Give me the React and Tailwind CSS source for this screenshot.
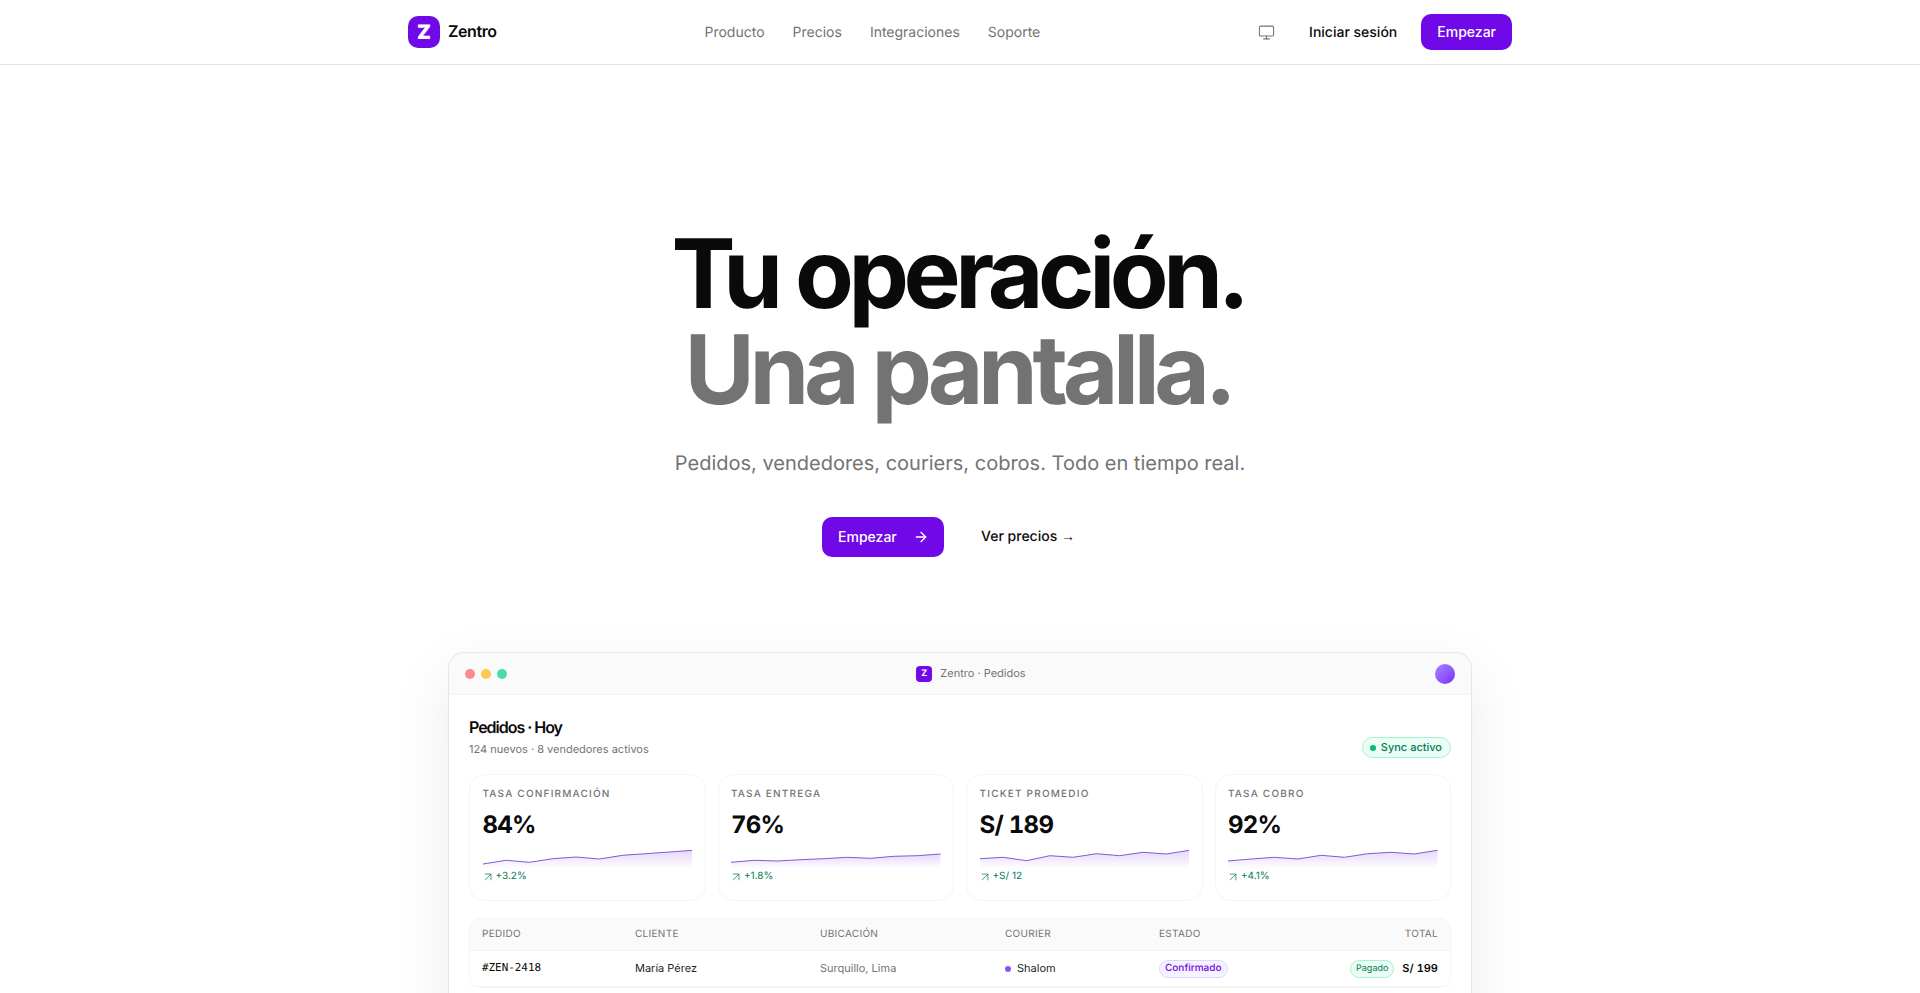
import React from 'react';
import { Monitor, ArrowRight, ArrowUpRight } from 'lucide-react';

const inter = 'font-["Inter",sans-serif]';

const cards = [
  { label: 'TASA CONFIRMACIÓN', value: '84%', delta: '+3.2%', points: [19, 15.3, 17.3, 13.7, 12, 14, 10.3, 8.7, 7, 5.3] },
  { label: 'TASA ENTREGA', value: '76%', delta: '+1.8%', points: [17.3, 15.3, 16, 14.7, 13.7, 12.3, 13.3, 11.3, 10.7, 9] },
  { label: 'TICKET PROMEDIO', value: 'S/ 189', delta: '+S/ 12', points: [13.7, 12.3, 15.7, 10.7, 12.3, 8.7, 10.7, 7.3, 9, 5.3] },
  { label: 'TASA COBRO', value: '92%', delta: '+4.1%', points: [16, 14, 12.3, 14, 10.3, 12.3, 8.7, 7.3, 9, 5.3] },
];

const Sparkline = ({ points, id }) => {
  const step = 211 / (points.length - 1);
  const line = points.map((y, i) => `${(i * step).toFixed(1)},${y}`).join(' ');
  return (
    <svg viewBox="0 0 211 24" preserveAspectRatio="none" className="mt-[4px] block h-6 w-full">
      <defs>
        <linearGradient id={id} x1="0" y1="0" x2="0" y2="1">
          <stop offset="0" stopColor="#7008e7" stopOpacity="0.16" />
          <stop offset="1" stopColor="#7008e7" stopOpacity="0" />
        </linearGradient>
      </defs>
      <polygon points={`0,24 ${line} 211,24`} fill={`url(#${id})`} />
      <polyline points={line} fill="none" stroke="#7d5bd0" strokeWidth="1" />
    </svg>
  );
};

const MetricCard = ({ card, id }) => (
  <div className="h-[127px] rounded-2xl border border-neutral-100 bg-white px-[12.5px] pt-[12px]">
    <div className="text-[10px] leading-[15px] font-medium tracking-[0.12em] text-neutral-500">{card.label}</div>
    <div className="mt-[7px] text-2xl leading-8 font-bold tracking-[-0.03em] text-neutral-950 tabular-nums">{card.value}</div>
    <Sparkline points={card.points} id={id} />
    <div className="-ml-[2px] flex items-center gap-[1px] text-[10px] leading-[15px] text-emerald-700">
      <ArrowUpRight className="h-[14px] w-[14px]" strokeWidth={1.25} />
      <span>{card.delta}</span>
    </div>
  </div>
);

export default function App() {
  return (
    <div className={`${inter} h-screen overflow-hidden bg-white text-neutral-950 [text-rendering:geometricPrecision]`}>
      <header className="h-[65px] border-b border-neutral-200">
        <div className="mx-auto flex h-16 max-w-[1152px] items-center justify-between px-6">
          <div className="flex items-center gap-2">
            <div className="flex h-8 w-8 items-center justify-center rounded-[10px] bg-violet-700 text-[20px] leading-none font-black text-white">Z</div>
            <span className="-mt-[2px] text-base font-semibold tracking-tight">Zentro</span>
          </div>
          <nav className="flex items-center gap-7 pt-px text-sm text-neutral-500">
            <span>Producto</span>
            <span>Precios</span>
            <span>Integraciones</span>
            <span>Soporte</span>
          </nav>
          <div className="flex items-center justify-end">
            <button className="pl-[10px]">
              <Monitor className="block h-[17px] w-[17px] text-neutral-500" strokeWidth={1.5} />
            </button>
            <span className="mt-px mr-6 ml-[34px] text-sm font-medium">Iniciar sesión</span>
            <button className="h-9 rounded-[10px] bg-violet-700 px-4 text-sm font-medium text-white">Empezar</button>
          </div>
        </div>
      </header>

      <main className="flex flex-col items-center">
        <h1 className="mt-[161px] pr-1 text-center text-8xl leading-[96px] font-bold tracking-[-0.056em]">
          <span className="block">Tu operación.</span>
          <span className="block text-neutral-500">Una pantalla.</span>
        </h1>
        <p className="mt-[31px] text-xl leading-7 text-neutral-500">Pedidos, vendedores, couriers, cobros. Todo en tiempo real.</p>
        <div className="mt-[40px] flex items-center">
          <button className="flex h-10 w-[122px] items-center gap-4 rounded-[10px] bg-violet-700 pl-4 text-sm font-medium text-white">
            Empezar
            <ArrowRight className="h-4 w-4" />
          </button>
          <span className="mr-[23px] ml-[37px] text-sm leading-5 font-medium">
            Ver precios <span className='font-["Liberation_Sans",sans-serif] leading-none'>→</span>
          </span>
        </div>

        <section className="mt-[95px] h-[600px] w-[1024px] rounded-2xl border border-neutral-200 bg-white shadow-[0_20px_60px_rgba(0,0,0,0.08)]">
          <div className="flex h-[42px] items-center justify-between rounded-t-2xl border-b border-neutral-100 bg-neutral-50 px-4">
            <div className="flex gap-1.5">
              <span className="h-2.5 w-2.5 rounded-full bg-[#fc8a90]" />
              <span className="h-2.5 w-2.5 rounded-full bg-[#fdca4e]" />
              <span className="h-2.5 w-2.5 rounded-full bg-[#48dcaa]" />
            </div>
            <div className="flex items-center gap-2 text-[11px] text-neutral-500">
              <span className="flex h-4 w-4 items-center justify-center rounded bg-violet-700 text-[9px] font-bold text-white">Z</span>
              Zentro · Pedidos
            </div>
            <span className="h-5 w-5 rounded-full bg-gradient-to-br from-violet-400 to-violet-600" />
          </div>

          <div className="px-5 pt-[20px]">
            <div className="flex items-end justify-between">
              <div>
                <div className="text-base leading-6 font-semibold tracking-[-0.064em]">Pedidos · Hoy</div>
                <div className="mt-[2px] text-[11px] leading-4 text-neutral-500">124 nuevos · 8 vendedores activos</div>
              </div>
              <div className="-mb-px flex h-[21px] items-center gap-[5px] rounded-full border border-emerald-200 bg-emerald-50 pr-[8px] pl-[7px] text-[11px] font-medium text-emerald-700">
                <span className="h-1.5 w-1.5 rounded-full bg-emerald-500" />
                Sync activo
              </div>
            </div>

            <div className="mt-[17px] grid grid-cols-4 gap-3">
              {cards.map((card, i) => (
                <MetricCard key={card.label} card={card} id={`spark-${i}`} />
              ))}
            </div>

            <div className="mt-[17px] rounded-xl border border-neutral-100">
              <div className="grid h-[32px] grid-cols-[153px_185px_185px_154px_1fr] items-center rounded-t-xl border-b border-neutral-100 bg-neutral-50 px-3 pb-px text-[10px] tracking-[0.03em] text-neutral-500">
                <span>PEDIDO</span>
                <span>CLIENTE</span>
                <span>UBICACIÓN</span>
                <span>COURIER</span>
                <div className="flex justify-between">
                  <span>ESTADO</span>
                  <span>TOTAL</span>
                </div>
              </div>
              <div className="grid h-[36px] grid-cols-[153px_185px_185px_154px_1fr] items-center border-b border-neutral-100 px-3 text-[11px] text-neutral-800">
                <span className={`font-["DejaVu_Sans_Mono",monospace] text-[10.9px] text-neutral-950`}>#ZEN-2418</span>
                <span>María Pérez</span>
                <span className="text-neutral-500">Surquillo, Lima</span>
                <span className="flex items-center gap-[6px]">
                  <span className="h-1.5 w-1.5 rounded-full bg-violet-500" />
                  Shalom
                </span>
                <div className="flex items-center justify-between">
                  <span className="flex h-[18px] items-center rounded-full border border-violet-200 bg-violet-50 px-[5px] text-[10px] font-medium text-violet-700">Confirmado</span>
                  <span className="flex items-center gap-2">
                    <span className="flex h-[18px] items-center rounded-full border border-emerald-200 bg-emerald-50 px-[5px] text-[9px] text-emerald-700">Pagado</span>
                    <span className="font-semibold text-neutral-950 tabular-nums">S/ 199</span>
                  </span>
                </div>
              </div>
            </div>
          </div>
        </section>
      </main>
    </div>
  );
}
